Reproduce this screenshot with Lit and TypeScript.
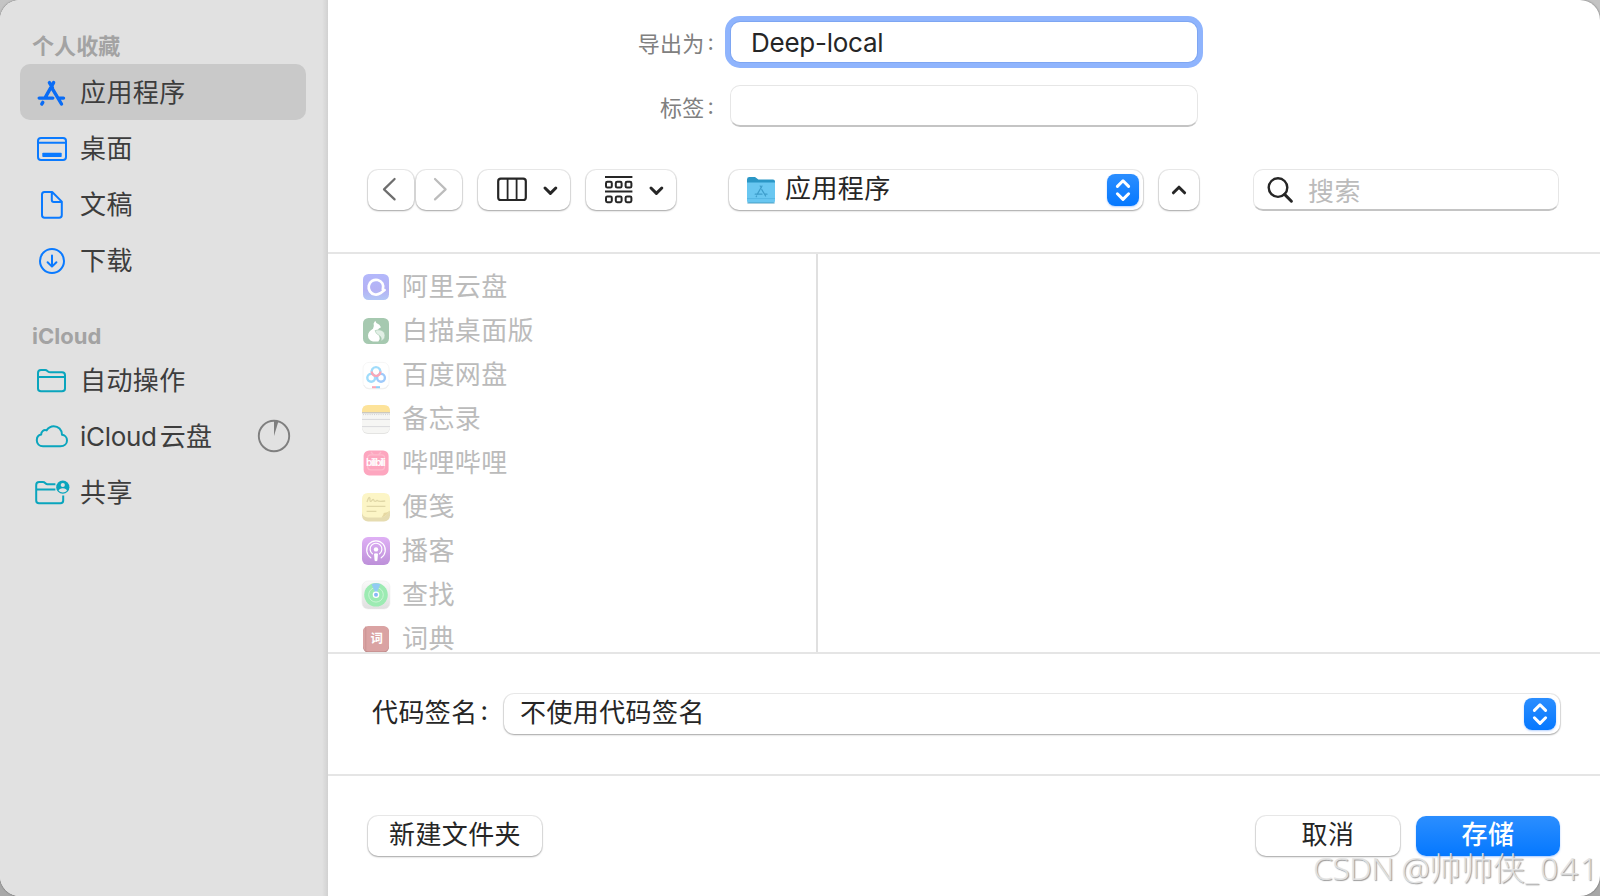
import { LitElement, html, svg, css } from "lit";
import { customElement, property } from "lit/decorators.js";
import { classMap } from "lit/directives/class-map.js";

const icons: Record<string, unknown> = {
  apps: svg`<svg width="34" height="34" viewBox="0.8 0 34 34" fill="none" stroke="#0a6cf5" stroke-width="3.4" stroke-linecap="round">
    <path d="M15.2 6.6 L18.2 11.6 M19.4 6.6 L11 21.6 M18.7 13.6 L27.3 28 M5 22.1 H18.6 M23.9 22.1 H29.3 M8.6 26.4 L7.6 28"/></svg>`,
  desktop: svg`<svg width="34" height="34" viewBox="0 0 34 34" fill="none" stroke="#0a7aff" stroke-width="2">
    <rect x="3" y="6" width="28" height="22" rx="3"/><path d="M3 10.8 H31"/><rect x="7.3" y="20.8" width="19.4" height="4.2" rx=".8" fill="#0a7aff" stroke="none"/></svg>`,
  doc: svg`<svg width="34" height="34" viewBox="0 0 34 34" fill="none" stroke="#0a7aff" stroke-width="2" stroke-linejoin="round">
    <path d="M9.4 4 H17.2 L26.8 13.6 V27 Q26.8 29.8 24.2 29.8 H9.6 Q7 29.8 7 27 V6.6 Q7 4 9.4 4 Z M16.8 4.4 V12 Q16.8 14 18.8 14 H26.4"/></svg>`,
  download: svg`<svg width="34" height="34" viewBox="0 0 34 34" fill="none" stroke="#0a7aff" stroke-width="2" stroke-linecap="round" stroke-linejoin="round">
    <circle cx="17" cy="17" r="12"/><path d="M17 11.4 V22.4 M12.6 18.2 L17 22.6 L21.4 18.2"/></svg>`,
  folder: svg`<svg width="34" height="34" viewBox="0 0 34 34" fill="none" stroke="#0aa5bd" stroke-width="2" stroke-linejoin="round">
    <path d="M3 25 V9 Q3 6 6 6 H10.2 Q11.4 6 12.4 6.9 L13 7.4 Q14 8.2 15.4 8.2 H27 Q30 8.2 30 11.2 V24.4 Q30 27.2 27 27.2 H6 Q3 27.2 3 24.4 Z M3 13 H30"/></svg>`,
  cloud: svg`<svg width="36" height="34" viewBox="1.6 0.4 36 34" fill="none" stroke="#0aa5bd" stroke-width="2" stroke-linejoin="round">
    <path d="M9.6 26.6 H27 C31 26.6 33.6 24 33.6 20.8 C33.6 17.4 31 15.4 28.6 15.2 C28.6 10 24.8 6.6 20.4 6.6 C16.8 6.6 14.6 8.6 13.2 10.8 C10.4 9.6 7.6 12 7.8 15 C5 15.6 3.4 18 3.4 20.6 C3.4 24.2 6 26.6 9.6 26.6 Z"/></svg>`,
  shared: svg`<svg width="36" height="34" viewBox="1.2 0 36 34" fill="none" stroke="#0aa5bd" stroke-width="2" stroke-linejoin="round">
    <path d="M21.6 8.2 H13.6 Q12.6 8.2 11.6 7.2 Q10.4 6 9 6 H5.4 Q2.4 6 2.4 9 V24.4 Q2.4 27.2 5.2 27.2 H26.6 Q29.4 27.2 29.4 24.4 V19.6 M2.4 13.4 H21.6"/>
    <circle cx="29" cy="11.2" r="6.6" fill="#0aa5bd" stroke="none"/><circle cx="29" cy="9" r="2.1" fill="#e1e1e1" stroke="none"/><path d="M24.8 14.8 Q25.4 12.2 29 12.2 Q32.6 12.2 33.2 14.8 Q31.6 16.4 29 16.4 Q26.4 16.4 24.8 14.8Z" fill="#e1e1e1" stroke="none"/></svg>`,
};

const appIcons: Record<string, unknown> = {
  aliyun: svg`<defs><linearGradient id="a" x2="0" y2="1"><stop stop-color="#b3b8fb"/><stop offset=".6" stop-color="#b4b1f4"/><stop offset="1" stop-color="#b3c8f6"/></linearGradient></defs>
    <rect x="2" y="2" width="26" height="26" rx="5.5" fill="url(#a)"/>
    <path d="M21.4 11.4 A7.4 7.4 0 1 0 19.4 21.2 L23.6 18 L21.8 17.4 Q23 14.4 21.4 11.4" fill="none" stroke="#fff" stroke-width="2.7" stroke-linecap="round" stroke-linejoin="round"/>`,
  baimiao: svg`<rect x="2" y="2" width="26" height="26" rx="5.5" fill="#a6c9b0"/>
    <path d="M12.6 7.4 L14.2 4.8 L15.4 7 Q19 8.2 20 11.2 Q17.4 12 16.6 14.6 Q16.4 17 18.2 19.4 Q19.6 22.6 17.4 25.6 H12 Q7 23.8 7 19.4 Q7.2 15.6 12 12.8 Q13.4 10.4 12.6 7.4Z" fill="#fff"/>
    <path d="M14 14.6 Q20 12.4 23.4 16.8 Q25.6 22.6 19.8 25.2 Q21.4 21.6 18.4 19.6 Q14.6 17.8 14 14.6Z" fill="#e1efe5" stroke="#a6c9b0" stroke-width=".6"/>`,
  baidu: svg`<rect x="2" y="2.4" width="26" height="26" rx="6" fill="#fff" stroke="#f4f4f4" stroke-width=".8"/>
    <path d="M2.8 25 Q4 28.8 8 28.8 H22 Q26 28.8 27.2 25" fill="none" stroke="#eee"/>
    <g fill="none" stroke-width="2.4"><circle cx="10.2" cy="17.8" r="3.9" stroke="#9fdcfb"/><circle cx="20" cy="17.8" r="3.9" stroke="#9fcafb"/><path d="M11 13.4 A4.4 4.4 0 1 1 19 13.4" stroke="#a0dcfb"/><path d="M10.8 11.6 A4.3 4.3 0 0 0 19.4 11.6" stroke="#fba6b6"/></g>
    <path d="M11 27.2 H15" stroke="#fba6b6" stroke-width="2"/><path d="M15 27.2 H19" stroke="#8fd0f8" stroke-width="2"/>`,
  notes: svg`<rect x="1" y="2" width="28" height="28" rx="6" fill="#e4e4e2"/><rect x="1" y="1" width="28" height="28" rx="6" fill="#f6f6f4"/>
    <path d="M1 8.4 V7 Q1 1 7 1 H23 Q29 1 29 7 V8.4Z" fill="#fde39a"/>
    <path d="M1 8.8 H29" stroke="#b9b9b9"/><path d="M2 10.6 H29" stroke="#ccc" stroke-dasharray="1 1.2" stroke-width=".9"/><path d="M1 15.4 H29 M1 22.6 H29" stroke="#d9d9dc"/>`,
  bili: svg`<rect x="2.6" y="2.4" width="25" height="25" rx="5.5" fill="#fda6bf"/><path d="M10 4 L12.4 6.6 M20 4 L17.6 6.6" stroke="#fdbccd" stroke-width="1.4"/><rect x="6.6" y="6.8" width="17" height="15" rx="3" fill="none" stroke="#fdbccd" stroke-width="1.2"/>
    <text x="5" y="18.4" textLength="20" lengthAdjust="spacing" font-size="10" font-weight="600" fill="#fff">bilibili</text>`,
  stickies: svg`<rect x="1" y="3" width="28" height="26.4" rx="6" fill="#e6dcb0"/><path d="M7 1 H23 Q29 1 29 7 V18.6 Q25 25 20.4 25.6 H7 Q1 25 1 20 V7 Q1 1 7 1Z" fill="#fcf5c6"/>
    <path d="M29 18.6 Q25 25 20.4 25.6 Q23 22.4 22.6 21 Q27 21 29 18.6Z" fill="#e6d8a2"/>
    <path d="M6 10 Q8 3.4 9 6.4 Q8.6 11.6 11.4 7.8 Q12.6 6.6 13.2 9 Q14.4 9.8 16 8.4 Q17.4 10 24.2 9 M5.6 14.4 H24.4 M5.6 19.4 H15.4" fill="none" stroke="#e0d7a6" stroke-width="1.3"/>`,
  podcast: svg`<defs><linearGradient id="p" x2="0" y2="1"><stop stop-color="#dfb0f5"/><stop offset="1" stop-color="#bd90d9"/></linearGradient></defs>
    <rect x="1" y="1" width="28" height="28" rx="6" fill="url(#p)"/>
    <g fill="none" stroke="#fff" stroke-width="1.2" stroke-linecap="round"><path d="M9.8 21.8 A9.3 9.3 0 1 1 20.2 21.8"/><path d="M11.4 17.8 A5.9 5.9 0 1 1 18.6 17.8"/></g>
    <circle cx="15" cy="13.4" r="2.2" fill="#fff"/><path d="M13 17.8 Q15 16.6 17 17.8 L16.4 24.6 Q15 26 13.6 24.6Z" fill="#fff"/>`,
  find: svg`<defs><linearGradient id="f" x2="0" y2="1"><stop stop-color="#fafafa"/><stop offset="1" stop-color="#dfdfdf"/></linearGradient></defs><rect x="1" y="1" width="28" height="28" rx="6" fill="url(#f)" stroke="#ececec" stroke-width=".6"/>
    <circle cx="15" cy="14.8" r="11.8" fill="#9cebb2"/><circle cx="15" cy="14.8" r="7.3" fill="none" stroke="#c9f5d4" stroke-width="1"/>
    <path d="M15 14.8 L10.6 4.2 Q15 2.2 19.4 4.2Z" fill="#92cbf4"/><circle cx="15" cy="14.8" r="3.3" fill="#fff"/><circle cx="15" cy="14.8" r="2" fill="#88b8f6"/>`,
  dict: svg`<rect x="2" y="2.6" width="26" height="26" rx="5.5" fill="#b98484"/><rect x="2" y="2" width="26" height="25.6" rx="5.5" fill="#daa3a3"/><path d="M4.8 2.4 V27.4" stroke="#c58f8f" stroke-width=".8"/>
    <text x="16" y="19.2" text-anchor="middle" font-size="12.4" font-weight="700" fill="#fff">词</text>`,
};

@customElement("side-row")
class SideRow extends LitElement {
  @property() icon = "";
  @property() latin = "";
  @property() label = "";
  @property({ type: Boolean }) selected = false;
  @property({ type: Boolean }) syncing = false;
  static styles = css`
    :host { display: block; }
    .row { display: flex; align-items: center; height: 56px; box-sizing: border-box; padding: var(--nudge, 0px) 15px 0 15px; border-radius: 10px; color: #3d3d3d; }
    .selected { background: #c9c9c9; }
    .icon { display: flex; width: 36px; margin-right: 9px; }
    .label { flex: 1; font-size: 26px; letter-spacing: 0.4px; line-height: 38px; white-space: nowrap; }
    .latin { letter-spacing: -0.3px; margin-right: 3px; }
    .pie { display: block; margin-bottom: 2px; }
  `;
  render() {
    return html`<div class=${classMap({ row: true, selected: this.selected })}>
      <span class="icon">${icons[this.icon]}</span><span class="label">${this.latin ? html`<span class="latin">${this.latin}</span>` : ""}${this.label}</span>
      ${this.syncing
        ? html`<svg class="pie" width="34" height="34" viewBox="0 0 34 34"><circle cx="17" cy="17" r="15.2" fill="none" stroke="#7f7f7f" stroke-width="1.9"/><path d="M17 17 V1.8 Q19.4 1.8 21.4 2.5Z" fill="#7f7f7f"/></svg>`
        : ""}
    </div>`;
  }
}

@customElement("app-row")
class AppRow extends LitElement {
  @property() icon = "";
  @property() label = "";
  static styles = css`
    :host { display: flex; align-items: center; height: 44px; color: #bbb; }
    .icon { display: block; margin-right: 11px; flex: none; overflow: visible; }
    .label { font-size: 26px; letter-spacing: 0.4px; line-height: 38px; }
  `;
  render() {
    return html`<svg class="icon" width="30" height="30" viewBox="0 0 30 30">${appIcons[this.icon]}</svg><span class="label">${this.label}</span>`;
  }
}

@customElement("pop-stepper")
class PopStepper extends LitElement {
  static styles = css`
    :host { display: flex; width: 32px; height: 32px; border-radius: 8px; background: linear-gradient(#2b8eff, #0578ff); box-shadow: 0 1px 2px rgba(0, 100, 255, 0.3); }
  `;
  render() {
    return html`<svg width="32" height="32" viewBox="0 0 32 32" fill="none" stroke="#fff" stroke-width="3" stroke-linecap="round" stroke-linejoin="round"><path d="M10.4 12.4 L16 6.8 L21.6 12.4 M10.4 19.8 L16 25.4 L21.6 19.8"/></svg>`;
  }
}

@customElement("app-root")
class AppRoot extends LitElement {
  static styles = css`
    :host { display: block; width: 1600px; height: 896px; overflow: hidden; position: relative; background: linear-gradient(#c4c4c4, #a8a8a8); color: #262626;
      font-family: Inter, "Noto Sans CJK SC", sans-serif; font-size: 26px; letter-spacing: 0.4px; }
    .window { display: flex; height: 896px; border-radius: 20px; overflow: hidden; background: #fff; box-shadow: 0 0 2px rgba(0,0,0,.5); }
    .sidebar { width: 328px; box-sizing: border-box; padding: 30px 22px 0 20px; background: linear-gradient(to right, transparent 322px, rgba(0,0,0,.07) 328px) #e1e1e1; }
    .heading { height: 34px; padding-left: 12px; font-size: 22px; line-height: 33px; letter-spacing: 0.1px; font-weight: 700; color: #a3a3a3; }
    .favourites { --nudge: 2px; }
    .second { height: 33px; margin-top: 32px; letter-spacing: 0; }
    .main { flex: 1; display: flex; flex-direction: column; min-width: 0; }
    .top { height: 252px; box-sizing: border-box; padding: 21px 41px 0 40px; }
    .field-row { display: flex; align-items: center; height: 42px; margin-bottom: 22px; }
    .field-label { width: 346px; margin-right: 16px; text-align: right; font-size: 22px; letter-spacing: 0.25px; color: #808080; }
    .colon { position: relative; top: -2px; margin-left: 3px; }
    .field { width: 468px; height: 42px; box-sizing: border-box; border-radius: 10px; background: #fff; }
    .plain { border: 1px solid #e6e6e6; border-bottom: 2px solid #c4c4c4; }
    .focused { height: 40px; width: 466px; margin-left: 1px; padding-left: 20px; line-height: 41px; border-radius: 9px; box-shadow: 0 0 0 1px #7ea6f2, 0 0 0 6px #8fb4fd; letter-spacing: -0.25px; }
    .toolbar { display: flex; align-items: center; height: 42px; margin-top: 42px; }
    .btn { display: flex; align-items: center; justify-content: center; height: 40px; box-sizing: border-box; border-radius: 10px; background: #fff;
      box-shadow: 0 0 0 1px rgba(0,0,0,.08), 0 1px 2px rgba(0,0,0,.3); }
    .text { line-height: 38px; padding-bottom: 3px; }
    .back, .forward { width: 46px; margin-right: 2px; }
    .forward { margin-right: 16px; }
    .columns { width: 92px; margin-right: 16px; }
    .group { width: 90px; margin-right: 53px; }
    .location { width: 414px; margin-right: 16px; padding: 0 4px 0 16px; justify-content: flex-start; }
    .up { width: 40px; margin-right: 54px; }
    .grow { flex: 1; }
    .folder { margin-right: 8px; }
    .search { display: flex; align-items: center; width: 306px; height: 42px; border-radius: 10px; color: #bbb; padding-left: 12px; box-sizing: border-box; }
    .search svg { margin-right: 14px; }
    .browser { display: flex; height: 400px; box-sizing: border-box; border-top: 2px solid #e5e5e5; }
    .list { width: 490px; height: 398px; box-sizing: border-box; padding: 11px 0 0 33px; border-right: 2px solid #e0e0e0; overflow: hidden; }
    .signing { display: flex; align-items: center; height: 122px; box-sizing: border-box; padding: 0 40px 0 44px; border-top: 2px solid #e5e5e5; }
    .signing-label { width: 132px; flex: none; }
    .signing-pop { flex: 1; justify-content: flex-start; padding: 0 4px 0 16px; }
    .footer { display: flex; height: 122px; box-sizing: border-box; padding: 40px 40px 0; border-top: 2px solid #e5e5e5; }
    .new { width: 174px; }
    .cancel { width: 144px; margin-right: 16px; }
    .save { width: 144px; color: #fff; font-weight: 500; background: linear-gradient(#2b8eff, #0578ff); box-shadow: 0 1px 2px rgba(0, 100, 255, .35); }
    .watermark { position: absolute; right: 2px; bottom: 6px; font: 32px/44px "Noto Sans", "Noto Sans CJK SC", sans-serif; font-weight: 300; letter-spacing: -0.7px; color: rgba(228,228,228,.92); text-shadow: 1px 1px 1px rgba(120,120,120,.75); white-space: nowrap; }
    .han { letter-spacing: 0; }
    .digits { letter-spacing: 1.6px; margin-right: -1.6px; }
  `;

  render() {
    const colon = html`<span class="colon">:</span>`;
    const apps = [
      ["aliyun", "阿里云盘"], ["baimiao", "白描桌面版"], ["baidu", "百度网盘"], ["notes", "备忘录"], ["bili", "哔哩哔哩"],
      ["stickies", "便笺"], ["podcast", "播客"], ["find", "查找"], ["dict", "词典"],
    ];
    return html`
      <div class="window">
        <nav class="sidebar">
          <div class="heading">个人收藏</div>
          <div class="favourites">
            <side-row icon="apps" label="应用程序" selected></side-row>
            <side-row icon="desktop" label="桌面"></side-row>
            <side-row icon="doc" label="文稿"></side-row>
            <side-row icon="download" label="下载"></side-row>
          </div>
          <div class="heading second">iCloud</div>
          <side-row icon="folder" label="自动操作"></side-row>
          <side-row icon="cloud" latin="iCloud" label="云盘" syncing></side-row>
          <side-row icon="shared" label="共享"></side-row>
        </nav>
        <main class="main">
          <section class="top">
            <div class="field-row"><div class="field-label">导出为${colon}</div><div class="field focused">Deep-local</div></div>
            <div class="field-row"><div class="field-label">标签${colon}</div><div class="field plain"></div></div>
            <div class="toolbar">
              <div class="btn back"><svg width="46" height="40" viewBox="0 0 46 40" fill="none" stroke="#6e6e6e" stroke-width="2.2" stroke-linecap="round" stroke-linejoin="round"><path d="M26.6 9 L16 19.4 L26.6 29.4"/></svg></div>
              <div class="btn forward"><svg width="46" height="40" viewBox="0 0 46 40" fill="none" stroke="#bcbcbc" stroke-width="2.2" stroke-linecap="round" stroke-linejoin="round"><path d="M19 9 L29.6 19.4 L19 29.4"/></svg></div>
              <div class="btn columns"><svg width="92" height="40" viewBox="0 0 92 40" fill="none" stroke="#262626"><rect x="20.2" y="8.6" width="27.6" height="21.4" rx="2.6" stroke-width="2.2"/><path d="M29.6 9 V30 M38.6 9 V30" stroke-width="1.8"/><path d="M67 18 L72.4 23.4 L77.8 18" stroke-width="3" stroke-linecap="round" stroke-linejoin="round"/></svg></div>
              <div class="btn group"><svg width="90" height="40" viewBox="0 0 90 40" fill="none" stroke="#262626" stroke-width="2"><path d="M19 7 H46.4 M19 21.6 H46.4"/>${[20, 29.8, 39.6].map((x) => svg`<rect x=${x} y="11.8" width="5.8" height="5.8" rx="1.4"/><rect x=${x} y="26.4" width="5.8" height="5.8" rx="1.4"/>`)}<path d="M65 18 L70.4 23.4 L75.8 18" stroke-width="3" stroke-linecap="round" stroke-linejoin="round"/></svg></div>
              <div class="btn location">
                <svg class="folder" width="32" height="30" viewBox="0 0 32 30"><path d="M2 4.4 Q2 2 4.4 2 H10 L13.4 4.4 H28 Q30 4.4 30 6.4 V12 H2Z" fill="#2b97c6"/><path d="M2 7.6 H30 V26 Q30 28 28 28 H4 Q2 28 2 26Z" fill="#69c7f1"/><path d="M2 23.6 H30" stroke="#52b2df" stroke-width=".8"/><path d="M2.4 28 H29.6" stroke="#4297bd" stroke-width=".9"/><path d="M15.2 11 L16.4 12.8 M17 11 L12.2 19.4 M16.8 14.6 L20.6 21 M10.2 19.2 H17 M19.6 19.2 H22 M11.6 21 L11.2 21.8" stroke="#3e9ecb" stroke-width="1.2" stroke-linecap="round"/></svg>
                <span class="grow text">应用程序</span><pop-stepper></pop-stepper>
              </div>
              <div class="btn up"><svg width="16" height="12" viewBox="0 0 16 12" fill="none" stroke="#262626" stroke-width="3" stroke-linecap="round" stroke-linejoin="round"><path d="M2.4 8.8 L8 3.2 L13.6 8.8"/></svg></div>
              <div class="search plain"><svg width="28" height="28" viewBox="0 0 28 28" fill="none" stroke="#262626" stroke-width="2.4" stroke-linecap="round"><circle cx="12" cy="11.6" r="9.3"/><path d="M18.6 18.4 L25.4 25.2" stroke-width="3"/></svg>搜索</div>
            </div>
          </section>
          <section class="browser">
            <div class="list">${apps.map(([icon, label]) => html`<app-row icon=${icon} label=${label}></app-row>`)}</div>
          </section>
          <section class="signing">
            <span class="signing-label text">代码签名${colon}</span>
            <div class="btn signing-pop"><span class="grow text">不使用代码签名</span><pop-stepper></pop-stepper></div>
          </section>
          <footer class="footer">
            <div class="btn new"><span class="text">新建文件夹</span></div><span class="grow"></span>
            <div class="btn cancel"><span class="text">取消</span></div><div class="btn save"><span class="text">存储</span></div>
          </footer>
        </main>
      </div>
      <div class="watermark">CSDN @<span class="han">帅帅侠</span><span class="digits">_041</span></div>
    `;
  }
}
